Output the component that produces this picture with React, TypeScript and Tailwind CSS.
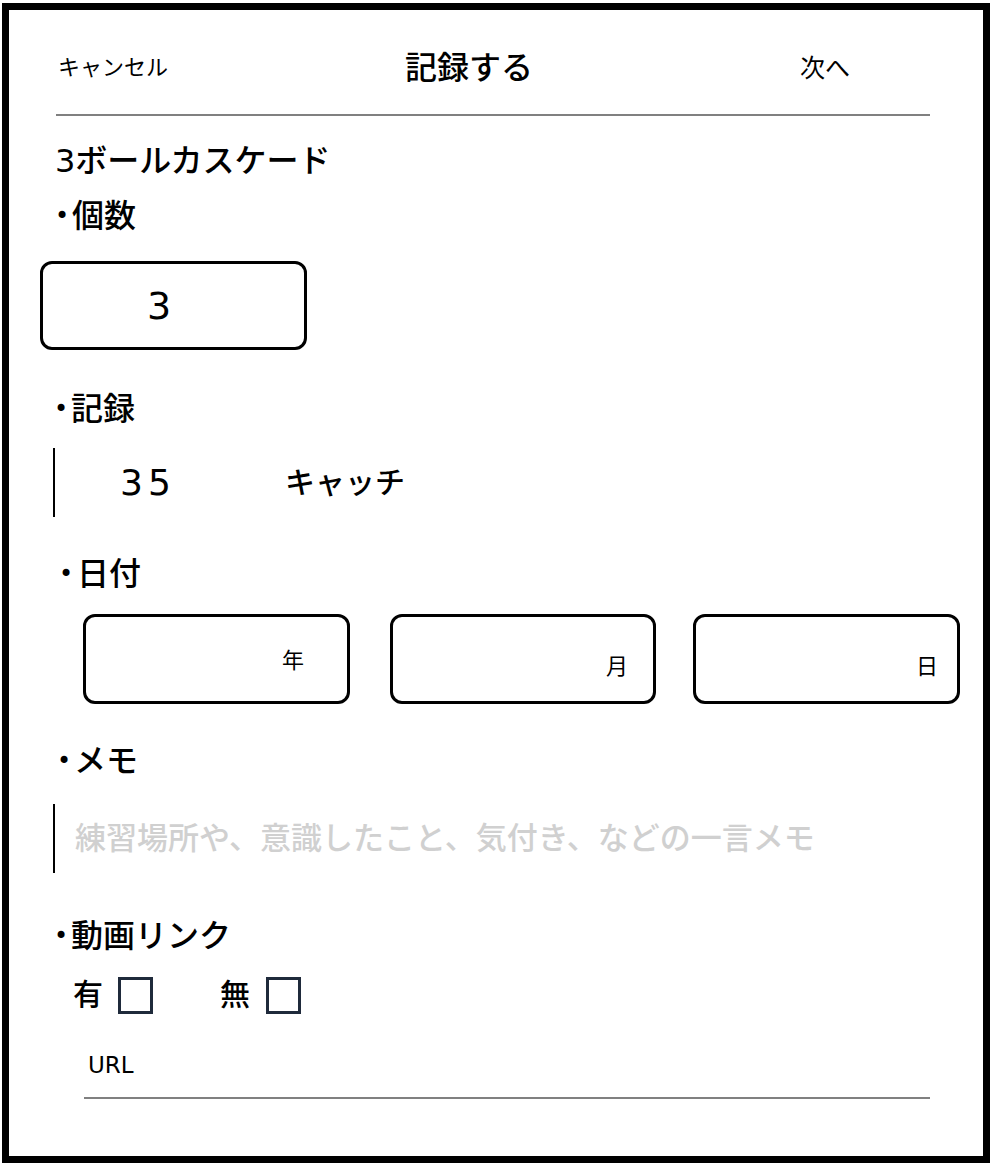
import * as React from "react";

const Label = ({ text, ml, mt, dot = "w-[20px]" }: { text: string; ml: string; mt: string; dot?: string }) => (
  <div className={`${ml} ${mt} h-[32px] flex items-center text-[32px] leading-none font-medium`}>
    <span className={`${dot} inline-block text-center text-[24px] leading-none`}>•</span>
    <span>{text}</span>
  </div>
);

export default function App() {
  const [video, setVideo] = React.useState<"yes" | "no" | null>(null);

  return (
    <div className="w-[992px] h-[1164px] bg-white pt-[3px] pl-[2px] text-black font-['DejaVu_Sans','Noto_Sans_CJK_JP',sans-serif]">
      <div className="w-[988px] h-[1160px] border-[7px] border-black bg-white overflow-hidden">
        {/* header */}
        <div className="ml-[47px] w-[874px] h-[106px] pt-[12px] border-b-2 border-[#808080] flex items-center">
          <span className="ml-[2px] w-[347px] text-[22px] leading-none">キャンセル</span>
          <span className="w-[395px] text-[32px] leading-none font-medium">記録する</span>
          <span className="text-[25px] leading-none">次へ</span>
        </div>

        <div className="ml-[46px] mt-[29px] h-[32px] flex items-center text-[32px] leading-none font-medium">3ボールカスケード</div>

        {/* count */}
        <Label text="個数" ml="ml-[43px]" mt="mt-[23px]" />
        <div className="ml-[31px] mt-[29px] w-[267px] h-[89px] border-[3px] border-black rounded-[12px] flex items-center pl-[104px] text-[38px] leading-none font-medium">
          3
        </div>

        {/* record */}
        <Label text="記録" ml="ml-[42px]" mt="mt-[43px]" />
        <div className="ml-[44px] mt-[23px] h-[69px] border-l-2 border-black flex items-center pl-[65px] font-medium">
          <span className="w-[165px] text-[36px] leading-none tracking-[5px]">35</span>
          <span className="text-[30px] leading-none">キャッチ</span>
        </div>

        {/* date */}
        <Label text="日付" ml="ml-[46px]" mt="mt-[41px]" dot="w-[22px]" />
        <div className="ml-[74px] mt-[24px] flex">
          <div className="w-[267px] h-[90px] border-[3px] border-black rounded-[12px] flex items-center justify-end pr-[43px] pt-[4px] text-[22px] leading-none">
            年
          </div>
          <div className="ml-[40px] w-[266px] h-[90px] border-[3px] border-black rounded-[12px] flex items-center justify-end pr-[25px] pt-[16px] text-[22px] leading-none">
            月
          </div>
          <div className="ml-[37px] w-[267px] h-[90px] border-[3px] border-black rounded-[12px] flex items-center justify-end pr-[19px] pt-[16px] text-[22px] leading-none">
            日
          </div>
        </div>

        {/* memo */}
        <Label text="メモ" ml="ml-[45px]" mt="mt-[41px]" />
        <div className="ml-[44px] mt-[27px] h-[69px] border-l-2 border-black flex items-center pl-[20px] text-[31px] leading-none text-[#d0d0d0] font-medium">
          練習場所や、意識したこと、気付き、などの一言メモ
        </div>

        {/* video link */}
        <Label text="動画リンク" ml="ml-[42px]" mt="mt-[47px]" />
        <div className="ml-[64px] mt-[24px] h-[38px] flex items-center text-[30px] leading-none font-medium">
          <span>有</span>
          <button
            onClick={() => setVideo("yes")}
            className="ml-[15px] w-[35px] h-[37px] border-[3px] border-[#1f2a3b] bg-white"
          />
          <span className="ml-[67px]">無</span>
          <button
            onClick={() => setVideo("no")}
            className="ml-[16px] w-[35px] h-[37px] border-[3px] border-[#1f2a3b] bg-white"
          />
        </div>

        <div className="ml-[75px] mt-[40px] w-[846px] border-b-2 border-[#808080] pl-[4px] pb-[20px]">
          <div className="h-[23px] flex items-center text-[23px] leading-none">URL</div>
        </div>
        {video && <span className="hidden">{video}</span>}
      </div>
    </div>
  );
}
